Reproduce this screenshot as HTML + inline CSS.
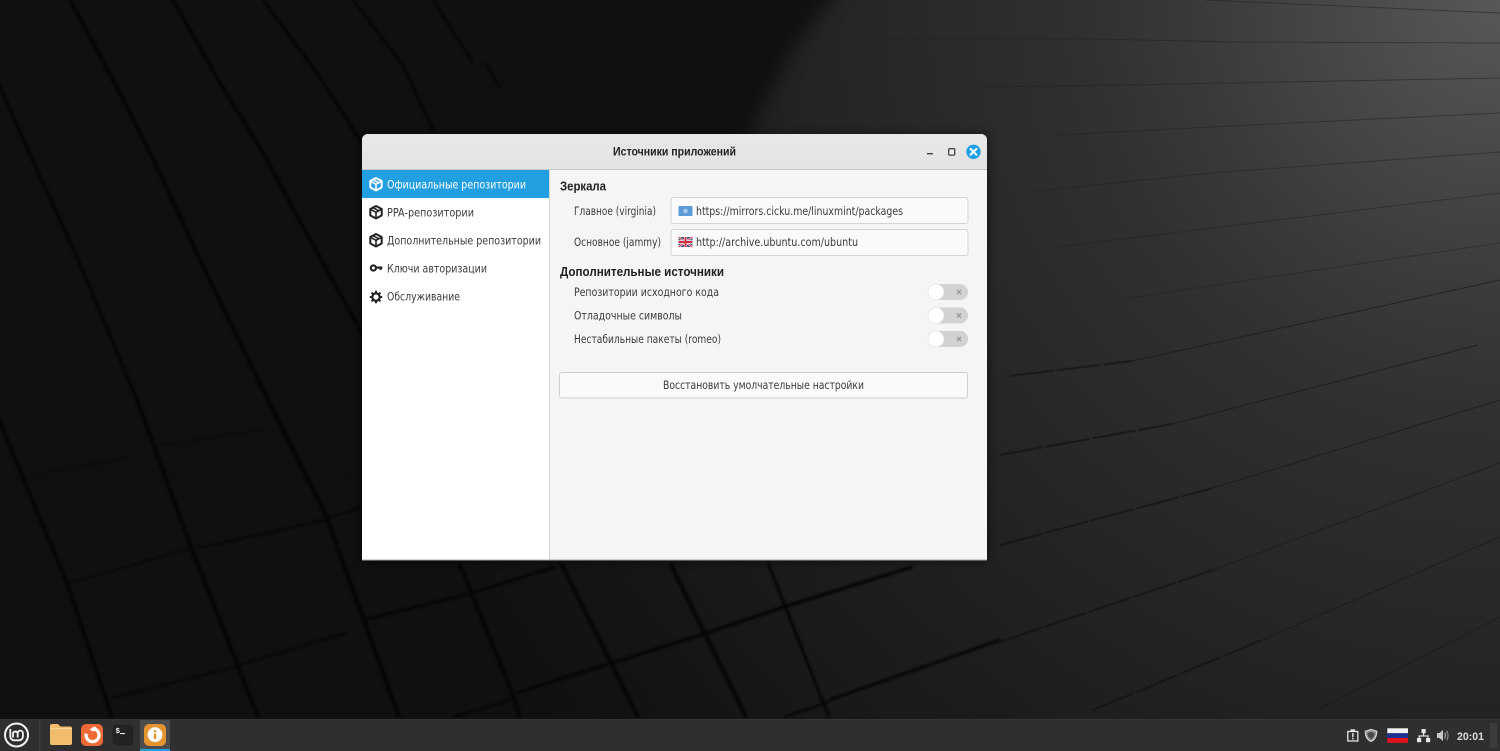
<!DOCTYPE html>
<html lang="ru">
<head>
<meta charset="utf-8">
<title>Источники приложений</title>
<style>
html,body{margin:0;padding:0;width:1500px;height:751px;overflow:hidden;background:#101010}
svg{display:block}
text{font-family:"DejaVu Sans","Liberation Sans",sans-serif;font-size:11.5px;fill:#3c3c3c}
.b{font-family:"Liberation Sans","DejaVu Sans",sans-serif;font-weight:bold;fill:#222;font-size:12.5px}
</style>
</head>
<body>
<svg xmlns="http://www.w3.org/2000/svg" width="1500" height="751" viewBox="0 0 1500 751" color-interpolation-filters="sRGB">
<defs>
<radialGradient id="rg" gradientUnits="userSpaceOnUse" cx="1500" cy="0" r="1200">
<stop offset="0" stop-color="#585858"/>
<stop offset=".1" stop-color="#4c4c4c"/>
<stop offset=".25" stop-color="#3a3a3a"/>
<stop offset=".35" stop-color="#303030"/>
<stop offset=".5" stop-color="#282828"/>
<stop offset=".67" stop-color="#1f1f1f"/>
<stop offset=".9" stop-color="#141414"/>
<stop offset="1" stop-color="#101010"/>
</radialGradient>
<linearGradient id="tb" x1="0" y1="0" x2="0" y2="1">
<stop offset="0" stop-color="#e8e8e8"/>
<stop offset="1" stop-color="#e3e3e3"/>
</linearGradient>
<filter id="b8" x="-20%" y="-20%" width="140%" height="140%" color-interpolation-filters="sRGB"><feGaussianBlur stdDeviation="9"/></filter>
<filter id="b1" x="-5%" y="-5%" width="110%" height="110%" color-interpolation-filters="sRGB"><feGaussianBlur stdDeviation="1"/></filter>
<filter id="b0" x="-5%" y="-5%" width="110%" height="110%" color-interpolation-filters="sRGB"><feGaussianBlur stdDeviation="0.4"/></filter>
<filter id="sh" x="-10%" y="-10%" width="120%" height="120%" color-interpolation-filters="sRGB"><feGaussianBlur stdDeviation="4"/></filter>
</defs>

<!-- wallpaper -->
<rect width="1500" height="751" fill="url(#rg)"/>
<polygon points="-40,-40 862,-40 792,50 750,133 720,300 500,460 -40,460" fill="#101010" filter="url(#b8)"/>

<!-- upper-left diagonals -->
<g fill="none" stroke="#050505" stroke-linejoin="round" filter="url(#b1)">
<polyline stroke-width="3" points="-2,83 43,183 77,257 137,400"/>
<polyline stroke-width="3.6" points="70,0 120,93 157,167 200,260 268,400"/>
<polyline stroke-width="3.4" points="173,0 220,83 263,153 303,227 362,333"/>
<polyline stroke-width="3" points="263,0 317,73 362,143"/>
<polyline stroke-width="2.6" points="353,0 403,65 433,130"/>
<polyline stroke-width="2.2" points="433,0 473,63"/>
<polyline stroke-width="2.2" points="485,63 500,87"/>
<polyline stroke-width="3.4" points="-4,412 3,430 67,583 112,717"/>
<polyline stroke-width="3.8" points="137,400 191,547 258,717"/>
<polyline stroke-width="4" points="268,400 325,513 399,717"/>
</g>
<!-- lower diagonals and cross lines -->
<g fill="none" stroke="#060606" stroke-linejoin="round" filter="url(#b1)">
<polyline stroke-width="4" points="459,563 510,687 520,717"/>
<polyline stroke-width="4" points="561,563 638,717"/>
<polyline stroke-width="4" points="670,563 746,717"/>
<polyline stroke-width="3" points="768,563 829,717"/>
<polyline stroke-width="1.6" points="70,583 191,548"/>
<polyline stroke-width="2" points="198,548 312,523 363,507"/>
<polyline stroke-width="1.2" points="32,475 127,458" stroke="#0a0a0a"/>
<polyline stroke-width="1.2" points="160,445 261,430" stroke="#0a0a0a"/>
<polyline stroke-width="2" points="112,698 223,670 348,632"/>
<polyline stroke-width="3" points="363,620 465,595 555,567"/>
<polyline stroke-width="3.4" points="516,693 612,663 701,635 784,607 912,567"/>
<polyline stroke-width="3" points="829,700 1000,640"/>
<polyline stroke-width="2.4" points="453,717 510,700"/>
<polyline stroke-width="2.4" points="784,717 829,702"/>
</g>

<!-- right dashes -->
<g fill="none" stroke="#0f0f0f" stroke-width="1.2" filter="url(#b0)" stroke-dasharray="44 3">
<polyline points="1010,376 1132,361"/>
<polyline points="1000,455 1172,424"/>
<polyline points="1000,545 1213,488"/>
<polyline points="1000,642 1213,570"/>
<polyline points="1093,710 1262,640"/>
</g>
<g fill="none" stroke="#181818" stroke-width="1" opacity=".7">
<polyline points="1132,361 1500,280"/>
<polyline points="1172,424 1478,345"/>
<polyline points="1213,488 1500,400"/>
<polyline points="1213,570 1500,463"/>
<polyline points="1262,640 1500,537"/>
<polyline points="1317,710 1500,617"/>
</g>
<g fill="none" stroke="#222" stroke-width="1" opacity=".55">
<polyline points="1205,0 1500,13"/>
<polyline points="858,38 1093,39 1236,42 1500,43"/>
<polyline points="975,87 1123,85 1500,78"/>
<polyline points="1057,135 1210,127 1500,113"/>
<polyline points="1027,192 1210,173 1500,152"/>
<polyline points="1057,247 1500,193"/>
<polyline points="1129,298 1500,243"/>
</g>

<!-- window shadow -->
<rect x="359" y="132" width="631" height="431" rx="8" fill="#000" opacity=".35" filter="url(#sh)"/>

<!-- window -->
<path d="M362 560V140a6 6 0 0 1 6-6H981a6 6 0 0 1 6 6V560Z" fill="#f5f5f5"/>
<path d="M362 170V140a6 6 0 0 1 6-6H981a6 6 0 0 1 6 6V170Z" fill="url(#tb)"/>
<rect x="362" y="169" width="625" height="1" fill="#c6c6c6"/>
<rect x="362" y="170" width="187" height="390" fill="#fff"/>
<rect x="549" y="170" width="1" height="390" fill="#d6d6d6"/>
<rect x="362" y="170" width="187" height="28" fill="#219fe0"/>
<rect x="362" y="559.5" width="625" height="1" fill="#a8a8a8"/>

<text class="b" x="613" y="155.5" textLength="123" lengthAdjust="spacingAndGlyphs" style="font-size:12px">Источники приложений</text>

<!-- window buttons -->
<rect x="927" y="153" width="6" height="1.4" fill="#444"/>
<rect x="948.7" y="148.7" width="6" height="6.4" rx="1" fill="#eee" stroke="#444" stroke-width="1.3"/>
<circle cx="973.5" cy="151.8" r="7.2" fill="#219fe0"/>
<path d="M970.6 148.9l5.8 5.8M976.4 148.9l-5.8 5.8" stroke="#fff" stroke-width="2" stroke-linecap="round"/>

<!-- sidebar icons -->
<g fill="none" stroke-width="2" stroke-linejoin="round">
<g stroke="#fff">
<path d="M376 178l5.7 3v6.4l-5.7 3.1-5.7-3.1V181Z"/>
<path d="M370.5 181.3l5.5 3 5.5-3M376 184.3v6M373 179.7l5.6 3" stroke-width="1.6"/>
</g>
<g stroke="#222">
<path d="M376 206l5.7 3v6.4l-5.7 3.1-5.7-3.1V209Z"/>
<path d="M370.5 209.3l5.5 3 5.5-3M376 212.3v6M373 207.7l5.6 3" stroke-width="1.6"/>
</g>
<g stroke="#222">
<path d="M376 234l5.7 3v6.4l-5.7 3.1-5.7-3.1V237Z"/>
<path d="M370.5 237.3l5.5 3 5.5-3M376 240.3v6M373 235.7l5.6 3" stroke-width="1.6"/>
</g>
<circle cx="373.4" cy="268" r="2.6" stroke="#222" stroke-width="2.1"/>
<path d="M376 267.6h6.4M380.6 267.6v2.4" stroke="#222" stroke-width="2.1"/>
<circle cx="376" cy="297" r="3.7" stroke="#222" stroke-width="2.2"/>
<path d="M376 290.8v2.4M376 300.8v2.4M369.8 297h2.4M379.8 297h2.4M371.6 292.6l1.7 1.7M378.7 299.7l1.7 1.7M380.4 292.6l-1.7 1.7M373.3 299.7l-1.7 1.7" stroke="#222" stroke-width="2"/>
</g>

<!-- sidebar labels -->
<text x="387" y="188.5" textLength="139" lengthAdjust="spacingAndGlyphs" style="fill:#fff">Официальные репозитории</text>
<text x="387" y="216.5" textLength="87" lengthAdjust="spacingAndGlyphs">PPA-репозитории</text>
<text x="387" y="244.5" textLength="154" lengthAdjust="spacingAndGlyphs">Дополнительные репозитории</text>
<text x="387" y="272.5" textLength="100" lengthAdjust="spacingAndGlyphs">Ключи авторизации</text>
<text x="387" y="300.5" textLength="73" lengthAdjust="spacingAndGlyphs">Обслуживание</text>

<!-- content -->
<text class="b" x="560" y="190.5" textLength="46" lengthAdjust="spacingAndGlyphs">Зеркала</text>
<text x="574" y="215" textLength="82" lengthAdjust="spacingAndGlyphs">Главное (virginia)</text>
<text x="574" y="246" textLength="87" lengthAdjust="spacingAndGlyphs">Основное (jammy)</text>

<rect x="671" y="197.5" width="297" height="26" rx="2.5" fill="#fafafa" stroke="#d4d4d4"/>
<rect x="671" y="229.5" width="297" height="26" rx="2.5" fill="#fafafa" stroke="#d4d4d4"/>

<!-- flag UN-like -->
<rect x="678.5" y="206" width="14" height="10" rx="1" fill="#5b9bd8"/>
<circle cx="685.5" cy="211" r="2.3" fill="#a6c8e8"/>
<!-- flag UK -->
<g>
<rect x="678.5" y="237" width="14" height="10" rx="1" fill="#2c3f80"/>
<path d="M678.5 237l14 10M692.5 237l-14 10" stroke="#eee" stroke-width="2"/>
<path d="M678.5 237l14 10M692.5 237l-14 10" stroke="#d03040" stroke-width=".8"/>
<path d="M685.5 237v10M678.5 242h14" stroke="#eee" stroke-width="3.4"/>
<path d="M685.5 237v10M678.5 242h14" stroke="#d03040" stroke-width="2"/>
</g>
<text x="696" y="215" textLength="207" lengthAdjust="spacingAndGlyphs">https://mirrors.cicku.me/linuxmint/packages</text>
<text x="696" y="246" textLength="162" lengthAdjust="spacingAndGlyphs">http://archive.ubuntu.com/ubuntu</text>

<text class="b" x="560" y="276" textLength="164" lengthAdjust="spacingAndGlyphs">Дополнительные источники</text>
<text x="574" y="296" textLength="145" lengthAdjust="spacingAndGlyphs">Репозитории исходного кода</text>
<text x="574" y="319.5" textLength="108" lengthAdjust="spacingAndGlyphs">Отладочные символы</text>
<text x="574" y="343" textLength="147" lengthAdjust="spacingAndGlyphs">Нестабильные пакеты (romeo)</text>

<!-- toggles -->
<g>
<rect x="928" y="284" width="40" height="16" rx="8" fill="#d2d2d2"/>
<circle cx="936" cy="292" r="8" fill="#fff" stroke="#dcdcdc" stroke-width=".6"/>
<path d="M957 290l4 4M961 290l-4 4" stroke="#999" stroke-width="1.3"/>
<rect x="928" y="307.5" width="40" height="16" rx="8" fill="#d2d2d2"/>
<circle cx="936" cy="315.5" r="8" fill="#fff" stroke="#dcdcdc" stroke-width=".6"/>
<path d="M957 313.5l4 4M961 313.5l-4 4" stroke="#999" stroke-width="1.3"/>
<rect x="928" y="331" width="40" height="16" rx="8" fill="#d2d2d2"/>
<circle cx="936" cy="339" r="8" fill="#fff" stroke="#dcdcdc" stroke-width=".6"/>
<path d="M957 337l4 4M961 337l-4 4" stroke="#999" stroke-width="1.3"/>
</g>

<!-- button -->
<rect x="559.5" y="372.5" width="408" height="25.5" rx="2.5" fill="#fafafa" stroke="#cfcfcf"/>
<text x="663" y="389" textLength="201" lengthAdjust="spacingAndGlyphs">Восстановить умолчательные настройки</text>

<!-- panel -->
<rect x="0" y="719" width="1500" height="32" fill="#2f2f2f"/>
<rect x="0" y="719" width="1500" height="1" fill="#363636"/>

<!-- mint logo -->
<circle cx="16.5" cy="735" r="11.5" fill="none" stroke="#f4f4f4" stroke-width="2"/>
<path d="M10.3 729v7.5a3.8 3.8 0 0 0 3.8 3.8h5a3.8 3.8 0 0 0 3.8-3.8v-3.3a2.6 2.6 0 0 0-5.2 0v4.3M17.7 733.2a2.5 2.5 0 0 0-4.7 0v4.3" fill="none" stroke="#f4f4f4" stroke-width="1.8"/>
<rect x="39.3" y="720" width="1" height="31" fill="#414141"/>

<!-- folder -->
<path d="M50 726a2 2 0 0 1 2-2h6l2.5 2.5h9.5a2 2 0 0 1 2 2V743a2 2 0 0 1-2 2H52a2 2 0 0 1-2-2Z" fill="#f1bd6c"/>
<rect x="50" y="728" width="22" height="1.2" fill="#f8d694"/>

<!-- firefox-like -->
<rect x="81" y="724" width="22" height="22" rx="5" fill="#ee6a36"/>
<path d="M92.5 728.6a6.5 6.5 0 1 1-6.3 5" fill="none" stroke="#fff" stroke-width="3.2"/>
<path d="M89.5 729.4l6-3 1 4-3.6 1Z" fill="#fff"/>

<!-- terminal -->
<rect x="112" y="724" width="22" height="22" rx="4" fill="#232323" stroke="#3a3a3a" stroke-width=".6"/>
<text x="115.5" y="733" style="font-family:'Liberation Mono',monospace;font-size:7.5px;fill:#eee;font-weight:bold">$</text>
<rect x="120" y="733" width="5" height="1.1" fill="#eee"/>

<!-- info app -->
<rect x="140" y="720" width="30" height="31" fill="#4c4c4c"/>
<rect x="140" y="749" width="30" height="2" fill="#219fe0"/>
<rect x="144" y="724" width="22" height="22" rx="5" fill="#e4952f"/>
<circle cx="155" cy="734.7" r="7.4" fill="#fff"/>
<rect x="153.9" y="733.5" width="2.3" height="5.5" fill="#e4952f"/>
<rect x="153.9" y="730.2" width="2.3" height="2.1" fill="#e4952f"/>

<!-- tray: updates/clipboard -->
<path d="M1347.8 731.5h10v9.5h-10Z" fill="none" stroke="#e4e4e4" stroke-width="1.3"/>
<rect x="1350.5" y="729.3" width="4.6" height="2.4" fill="#e4e4e4"/>
<rect x="1352.1" y="733.2" width="1.5" height="4" fill="#e4e4e4"/>
<rect x="1352.1" y="738" width="1.5" height="1.5" fill="#e4e4e4"/>
<!-- shield -->
<path d="M1371 729.5l5.7 1.8c0 5-1.6 8.4-5.7 10.2-4.1-1.8-5.7-5.2-5.7-10.2Z" fill="#8d8d8d" stroke="#d4d4d4" stroke-width="1.2"/>
<path d="M1371 732l3.5 1.1c-.2 3-1.2 4.8-3.5 6-2.3-1.2-3.3-3-3.5-6Z" fill="#4a4a4a"/>
<!-- flag RU -->
<rect x="1387.3" y="728.3" width="20.7" height="5" fill="#f4f4f4"/>
<rect x="1387.3" y="733.2" width="20.7" height="4.8" fill="#1f2f8f"/>
<rect x="1387.3" y="738" width="20.7" height="4.8" fill="#e0141c"/>
<!-- network -->
<g fill="#e8e8e8">
<rect x="1421.5" y="729" width="4.2" height="4.2"/>
<rect x="1417" y="738" width="4.2" height="4.2"/>
<rect x="1426" y="738" width="4.2" height="4.2"/>
<rect x="1423" y="733" width="1.2" height="3"/>
<rect x="1418.7" y="735.4" width="9.9" height="1.2"/>
<rect x="1418.7" y="735.4" width="1.2" height="3"/>
<rect x="1427.4" y="735.4" width="1.2" height="3"/>
</g>
<!-- volume -->
<path d="M1437 733h2.4l3.6-3v11l-3.6-3H1437Z" fill="#c8c8c8"/>
<path d="M1444.7 732.5q1.4 3 0 6" fill="none" stroke="#a8a8a8" stroke-width="1.2"/>
<path d="M1446.8 730.8q2.4 4.7 0 9.4" fill="none" stroke="#8a8a8a" stroke-width="1.2"/>
<!-- clock -->
<text x="1457" y="740" textLength="27" lengthAdjust="spacingAndGlyphs" style="font-family:'Liberation Sans',sans-serif;font-weight:bold;font-size:11px;fill:#dcdcdc">20:01</text>
<rect x="1490" y="723" width="7" height="25" fill="#3b3b3b"/>
</svg>
</body>
</html>
